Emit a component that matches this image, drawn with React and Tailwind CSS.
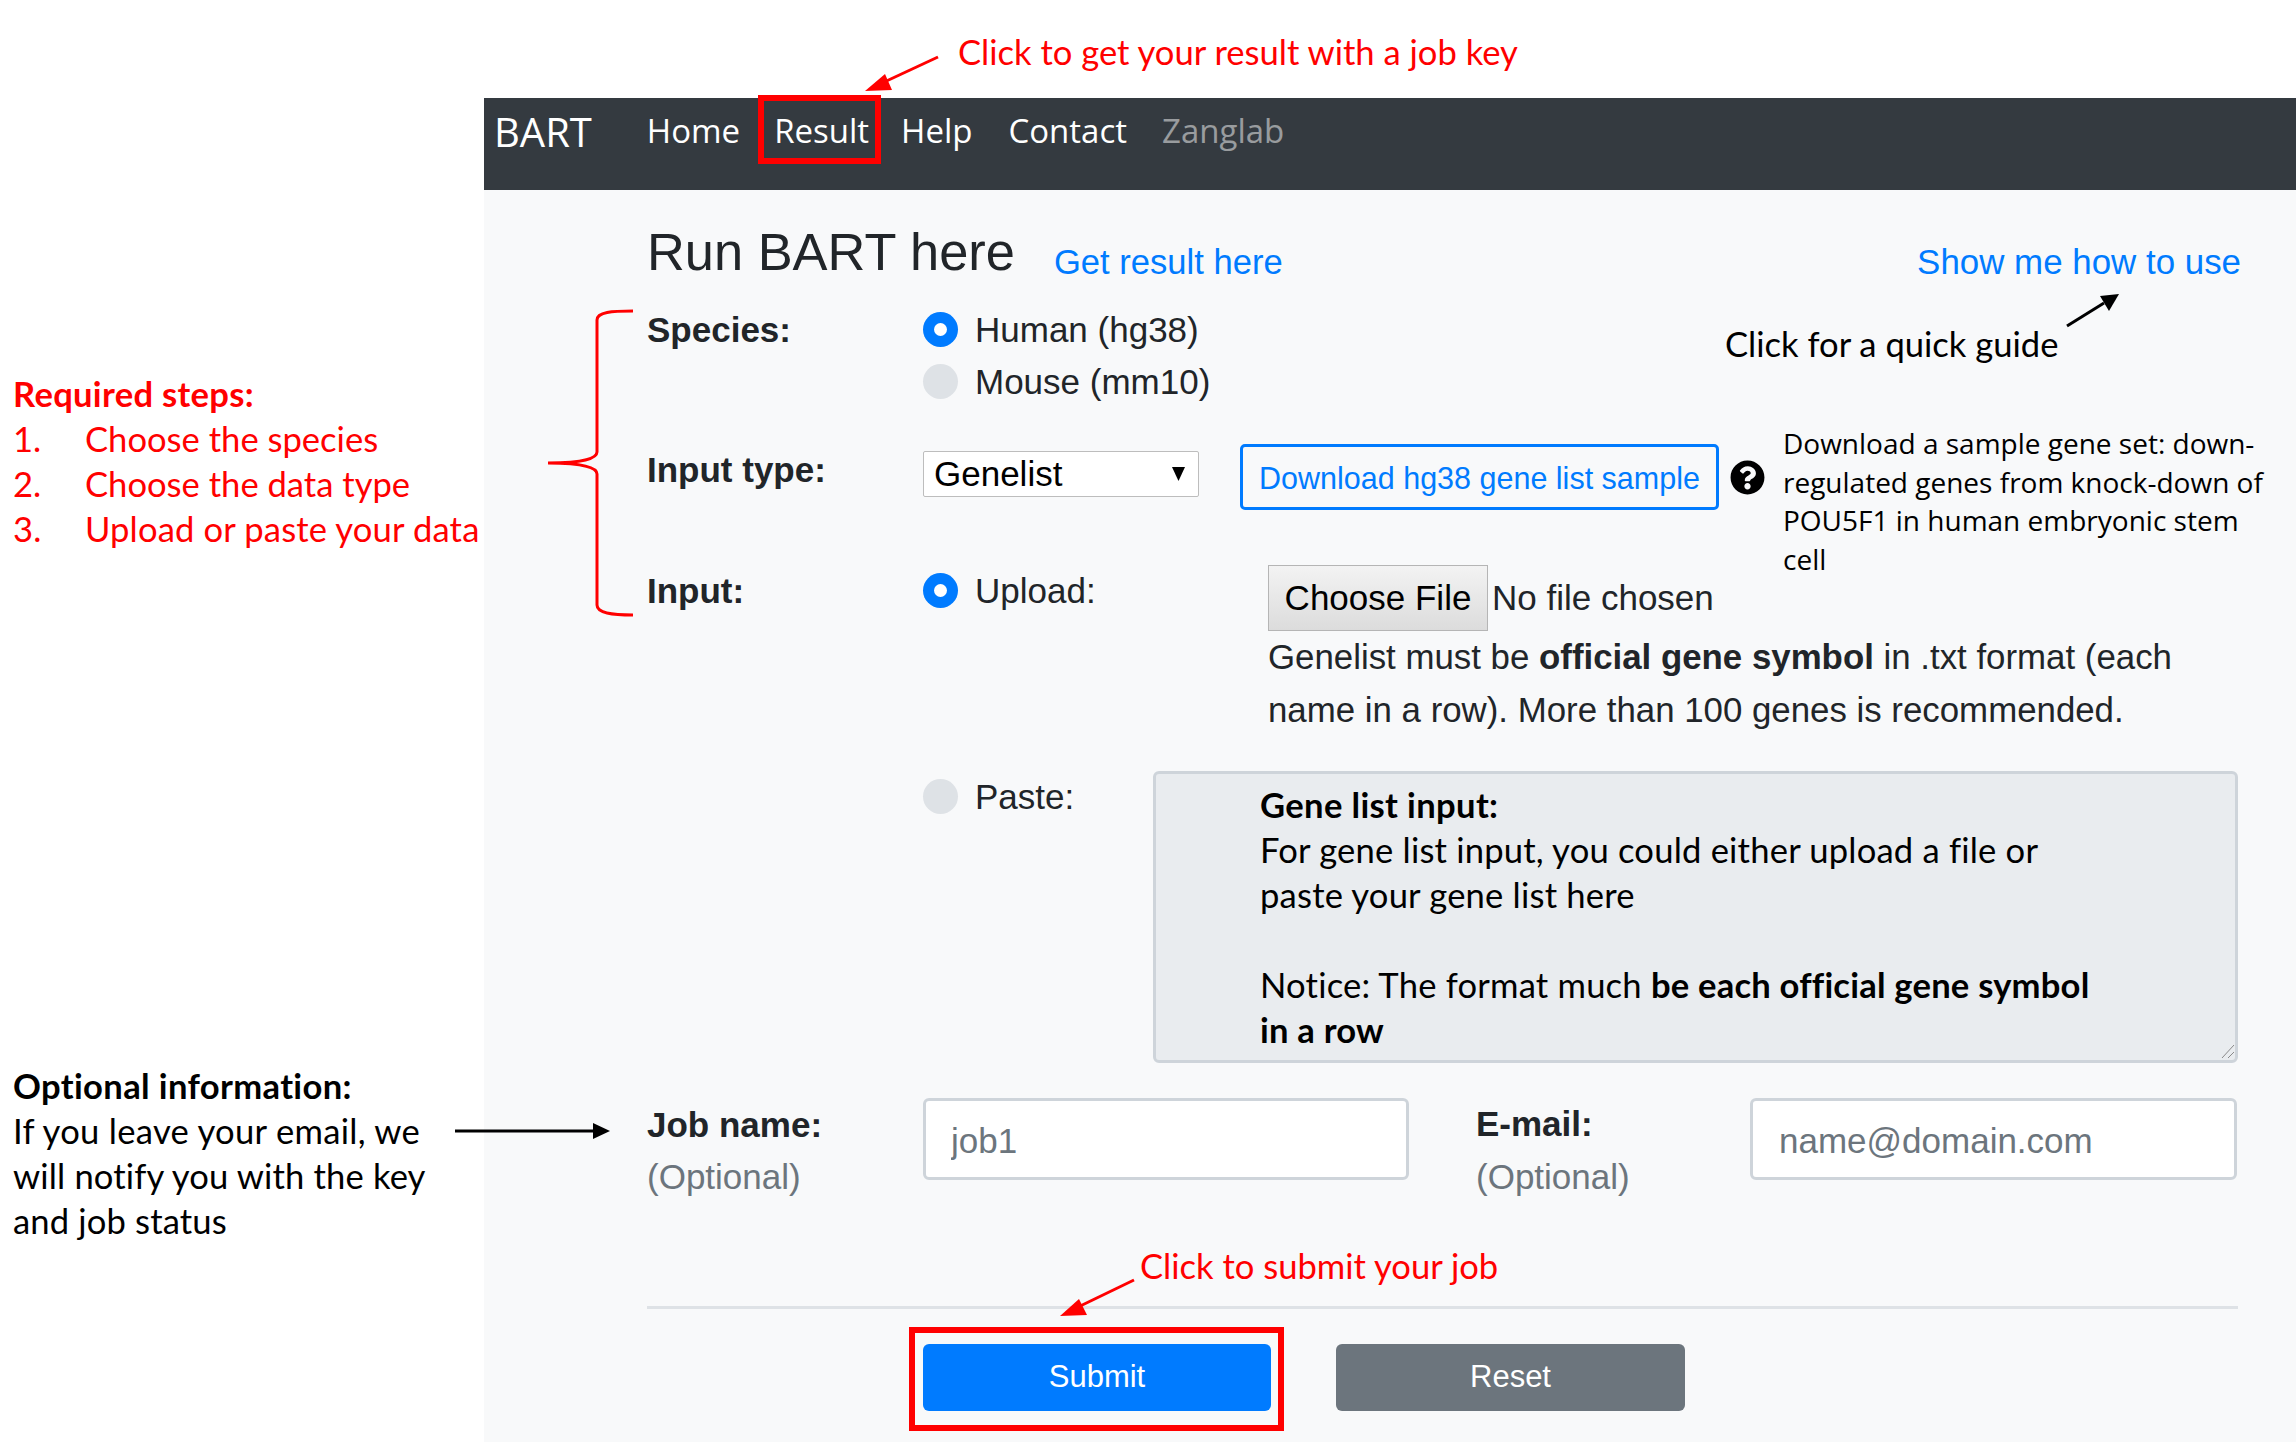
import React from 'react';
import { FaQuestionCircle } from 'react-icons/fa';

const calibri = "font-['Lato',sans-serif] text-[34.6px] leading-[45px]";

function Radio({ on }) {
  return on ? (
    <span className='flex h-[35px] w-[35px] shrink-0 items-center justify-center rounded-full bg-[#007bff]'>
      <span className='h-[13px] w-[13px] rounded-full bg-white'></span>
    </span>
  ) : (
    <span className='block h-[35px] w-[35px] shrink-0 rounded-full bg-[#dee2e6]'></span>
  );
}

function Label({ children, className = '' }) {
  return <div className={`w-[276px] shrink-0 text-[35px] leading-[36px] font-bold text-[#212529] ${className}`}>{children}</div>;
}

function Overlay() {
  return (
    <svg className='absolute top-0 left-0 pointer-events-none' width='2296' height='1442' viewBox='0 0 2296 1442' fill='none'>
      {/* brace */}
      <path d='M633 311 C612 311 597 312 597 320 L597 452 C597 458 585 463 548 463 C585 463 597 468 597 474 L597 605 C597 613 612 615 633 615' stroke='#ff0000' strokeWidth='3' />
      {/* red arrows */}
      <path d='M938 57 L880 84' stroke='#ff0000' strokeWidth='3' />
      <path d='M865 91 L885 74 L892 90 Z' fill='#ff0000' />
      <path d='M1134 1280 L1074 1309' stroke='#ff0000' strokeWidth='3' />
      <path d='M1060 1316 L1079 1299 L1087 1315 Z' fill='#ff0000' />
      {/* black arrows */}
      <path d='M2067 326 L2104 303' stroke='#000' strokeWidth='3' />
      <path d='M2119 294 L2100 296 L2109 311 Z' fill='#000' />
      <path d='M455 1131 L596 1131' stroke='#000' strokeWidth='3' />
      <path d='M610 1131 L593 1123 L593 1139 Z' fill='#000' />
    </svg>
  );
}

export default function App() {
  return (
    <div className="relative flex h-[1442px] w-[2296px] overflow-hidden bg-white font-['Liberation_Sans',sans-serif]">
      <div className={`w-[484px] shrink-0 pl-[13px] pt-[371px] text-[#ff0000] ${calibri}`}>
        <p className='font-bold tracking-[0.3px]'>Required steps:</p>
        <p className='flex'><span className='w-[72px]'>1.</span>Choose the species</p>
        <p className='flex'><span className='w-[72px]'>2.</span>Choose the data type</p>
        <p className='flex whitespace-nowrap tracking-[0.15px]'><span className='w-[72px] shrink-0'>3.</span>Upload or paste your data</p>
        <div className='mt-[512px] whitespace-nowrap tracking-[0.15px] text-black'>
          <p className='font-bold tracking-[0.35px]'>Optional information:</p>
          <p className='tracking-[0.3px]'>If you leave your email, we</p>
          <p>will notify you with the key</p>
          <p>and job status</p>
        </div>
      </div>

      <div className='flex-1 pt-[98px]'>
        <nav className="flex h-[92px] items-start bg-[#343a40] pl-[10px] font-['Open_Sans',sans-serif] text-[33px] leading-[66px] text-white">
          <span className='text-[40px] leading-[68px]'>BART</span>
          <a className='ml-[55px]'>Home</a>
          <a className='ml-[34px]'>Result</a>
          <a className='ml-[32px]'>Help</a>
          <a className='ml-[36px]'>Contact</a>
          <a className='ml-[35px] text-white/50'>Zanglab</a>
        </nav>

        <div className='h-[1252px] bg-[#f8f9fa] pl-[163px] pr-[59px] text-[#212529]'>
          <div className='flex items-start pt-[33px]'>
            <h2 className='text-[52.4px] leading-[59px]'>Run BART here</h2>
            <a className='ml-[39px] mt-[19px] text-[34.6px] leading-[40px] text-[#007bff]'>Get result here</a>
            <a className='ml-auto -mr-[3px] mt-[19px] text-[34.9px] leading-[40px] text-[#007bff]'>Show me how to use</a>
          </div>

          <div className='mt-[30px] flex'>
            <Label>Species:</Label>
            <div className='flex flex-col gap-[17px] text-[35px] leading-[35px]'>
              <div className='flex items-center gap-[17px]'><Radio on />Human (hg38)</div>
              <div className='flex items-center gap-[17px]'><Radio />Mouse (mm10)</div>
            </div>
          </div>

          <div className='relative mt-[45px] flex h-[66px] items-start'>
            <Label className='mt-[8px]'>Input type:</Label>
            <div className='mt-[7px] flex h-[46px] w-[276px] items-center justify-between rounded-[2px] border border-[#bdbdbd] bg-white pl-[10px] pr-[13px] text-[35px] leading-[40px] text-black'>
              Genelist
              <svg width='13' height='14' viewBox='0 0 13 14'><path d='M0 0H13L6.5 14Z' fill='#000' /></svg>
            </div>
            <button className='ml-[41px] h-[66px] w-[479px] rounded-[5px] border-[3px] border-[#007bff] pt-[2px] text-[30.5px] leading-[40px] whitespace-nowrap text-[#007bff]'>Download hg38 gene list sample</button>
            <FaQuestionCircle className='ml-[11px] mt-[16px] text-black' size={35} />
            <div className="absolute left-[1136px] top-[-20px] w-[490px] font-['Open_Sans',sans-serif] text-[28px] leading-[38.5px] text-black">
              Download a sample gene set: down-regulated genes from knock-down of POU5F1 in human embryonic stem cell
            </div>
          </div>

          <div className='mt-[54px] flex items-start'>
            <Label className='mt-[9px]'>Input:</Label>
            <div className='mt-[9px] flex w-[345px] shrink-0 items-center gap-[17px] text-[35px] leading-[35px]'><Radio on />Upload:</div>
            <div className='text-[35px]'>
              <div className='flex h-[67px] items-center'>
                <button className='h-[66px] w-[220px] border border-[#b5b5b5] bg-gradient-to-b from-[#f3f3f3] to-[#dcdcdc] pt-[2px] text-black'>Choose File</button>
                <span className='ml-[4px] mt-[2px]'>No file chosen</span>
              </div>
              <p className='w-[960px] text-[34.85px] leading-[52.5px]'>Genelist must be <b>official gene symbol</b> in .txt format (each name in a row). More than 100 genes is recommended.</p>
            </div>
          </div>

          <div className='mt-[35px] flex items-start'>
            <div className='w-[276px] shrink-0'></div>
            <div className='mt-[8px] flex w-[230px] shrink-0 items-center gap-[17px] text-[35px] leading-[35px]'><Radio />Paste:</div>
            <div className={`relative h-[292px] w-[1085px] rounded-[6px] border-[3px] border-[#ced4da] bg-[#e9ecef] pl-[104px] pt-[8px] tracking-[0.2px] text-black ${calibri}`}>
              <p className='font-bold tracking-[0.35px]'>Gene list input:</p>
              <p>For gene list input, you could either upload a file or</p>
              <p>paste your gene list here</p>
              <p className='h-[45px]'></p>
              <p>Notice: The format much <b className='tracking-[0.2px]'>be each official gene symbol</b></p>
              <p className='font-bold'>in a row</p>
              <svg className='absolute right-0 bottom-[1px]' width='16' height='16' viewBox='0 0 16 16' fill='none'><path d='M15 2L3 15M15 9L9 15' stroke='#8a8a8a' strokeWidth='1' /></svg>
            </div>
          </div>

          <div className='mt-[35px] flex items-start'>
            <div className='w-[276px] shrink-0 pt-[1px] text-[35px] leading-[52px]'>
              <div className='font-bold'>Job name:</div>
              <div className='text-[#6c757d]'>(Optional)</div>
            </div>
            <input className='h-[82px] w-[486px] rounded-[6px] border-[3px] border-[#ced4da] bg-white px-[25px] pt-[3px] text-[35px] placeholder:text-[#6c757d]' placeholder='job1' />
            <div className='ml-[67px] w-[274px] shrink-0 text-[35px] leading-[52px]'>
              <div className='font-bold'>E-mail:</div>
              <div className='pt-[1px] text-[#6c757d]'>(Optional)</div>
            </div>
            <input className='h-[82px] w-[487px] rounded-[6px] border-[3px] border-[#ced4da] bg-white px-[26px] pt-[3px] text-[35px] placeholder:text-[#6c757d]' placeholder='name@domain.com' />
          </div>

          <hr className='mt-[103px] border-t-[3px] border-[#dee2e6]' />

          <div className='mt-[35px] flex pl-[276px]'>
            <button className='h-[67px] w-[348px] rounded-[6px] bg-[#007bff] text-[31px] text-white'>Submit</button>
            <button className='ml-[65px] h-[67px] w-[349px] rounded-[6px] bg-[#6c757d] text-[31px] text-white'>Reset</button>
          </div>
        </div>
      </div>

      <Overlay />
      <span className={`absolute left-[958px] top-[29px] whitespace-nowrap text-[#ff0000] ${calibri}`}>Click to get your result with a job key</span>
      <span className={`absolute left-[1725px] top-[321px] whitespace-nowrap text-black ${calibri}`}>Click for a quick guide</span>
      <span className={`absolute left-[1140px] top-[1243px] whitespace-nowrap text-[#ff0000] ${calibri}`}>Click to submit your job</span>
      <div className='absolute left-[758px] top-[95px] h-[69px] w-[123px] border-[6px] border-[#ff0000]'></div>
      <div className='absolute left-[909px] top-[1327px] h-[104px] w-[375px] border-[6px] border-[#ff0000]'></div>
    </div>
  );
}
